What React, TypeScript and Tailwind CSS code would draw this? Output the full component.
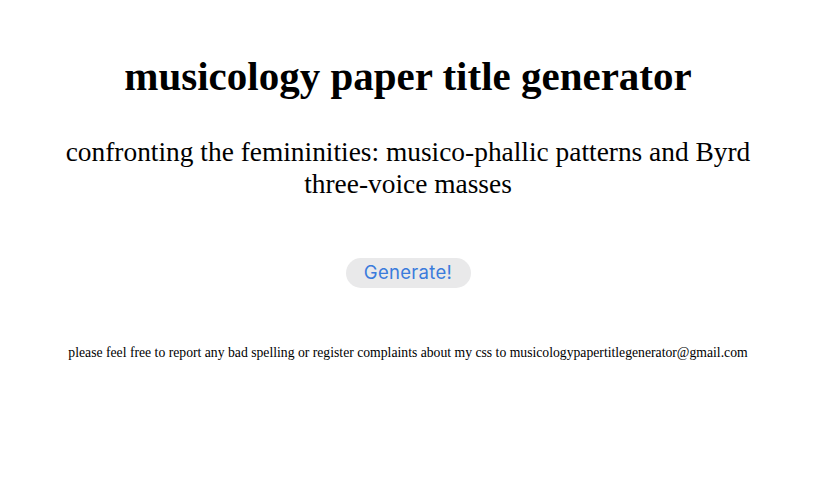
import { useState } from "react";

const titles = [
  "confronting the femininities: musico-phallic patterns and Byrd three-voice masses",
];

export default function App() {
  const [title, setTitle] = useState(titles[0]);

  return (
    <div className="min-h-screen bg-white text-black font-['Liberation_Serif',serif] flex flex-col items-center text-center pr-[12px]">
      <h1 className="mt-[48px] text-[41px] leading-[56px] font-bold">
        musicology paper title generator
      </h1>

      <p className="mt-[32px] px-[60px] text-[27.4px] leading-[32px]">{title}</p>

      {/* Generate button */}
      <button
        onClick={() => setTitle(titles[Math.floor(Math.random() * titles.length)])}
        className="mt-[58px] h-[30px] w-[125px] rounded-full bg-[#e9e9ea] text-[#3a7bdc] text-[18.5px] tracking-[0.3px] font-['Inter',sans-serif]"
      >
        Generate!
      </button>

      <p className="mt-[57px] text-[13.7px] leading-[16px]">
        please feel free to report any bad spelling or register complaints about my css to
        musicologypapertitlegenerator@gmail.com
      </p>
    </div>
  );
}
